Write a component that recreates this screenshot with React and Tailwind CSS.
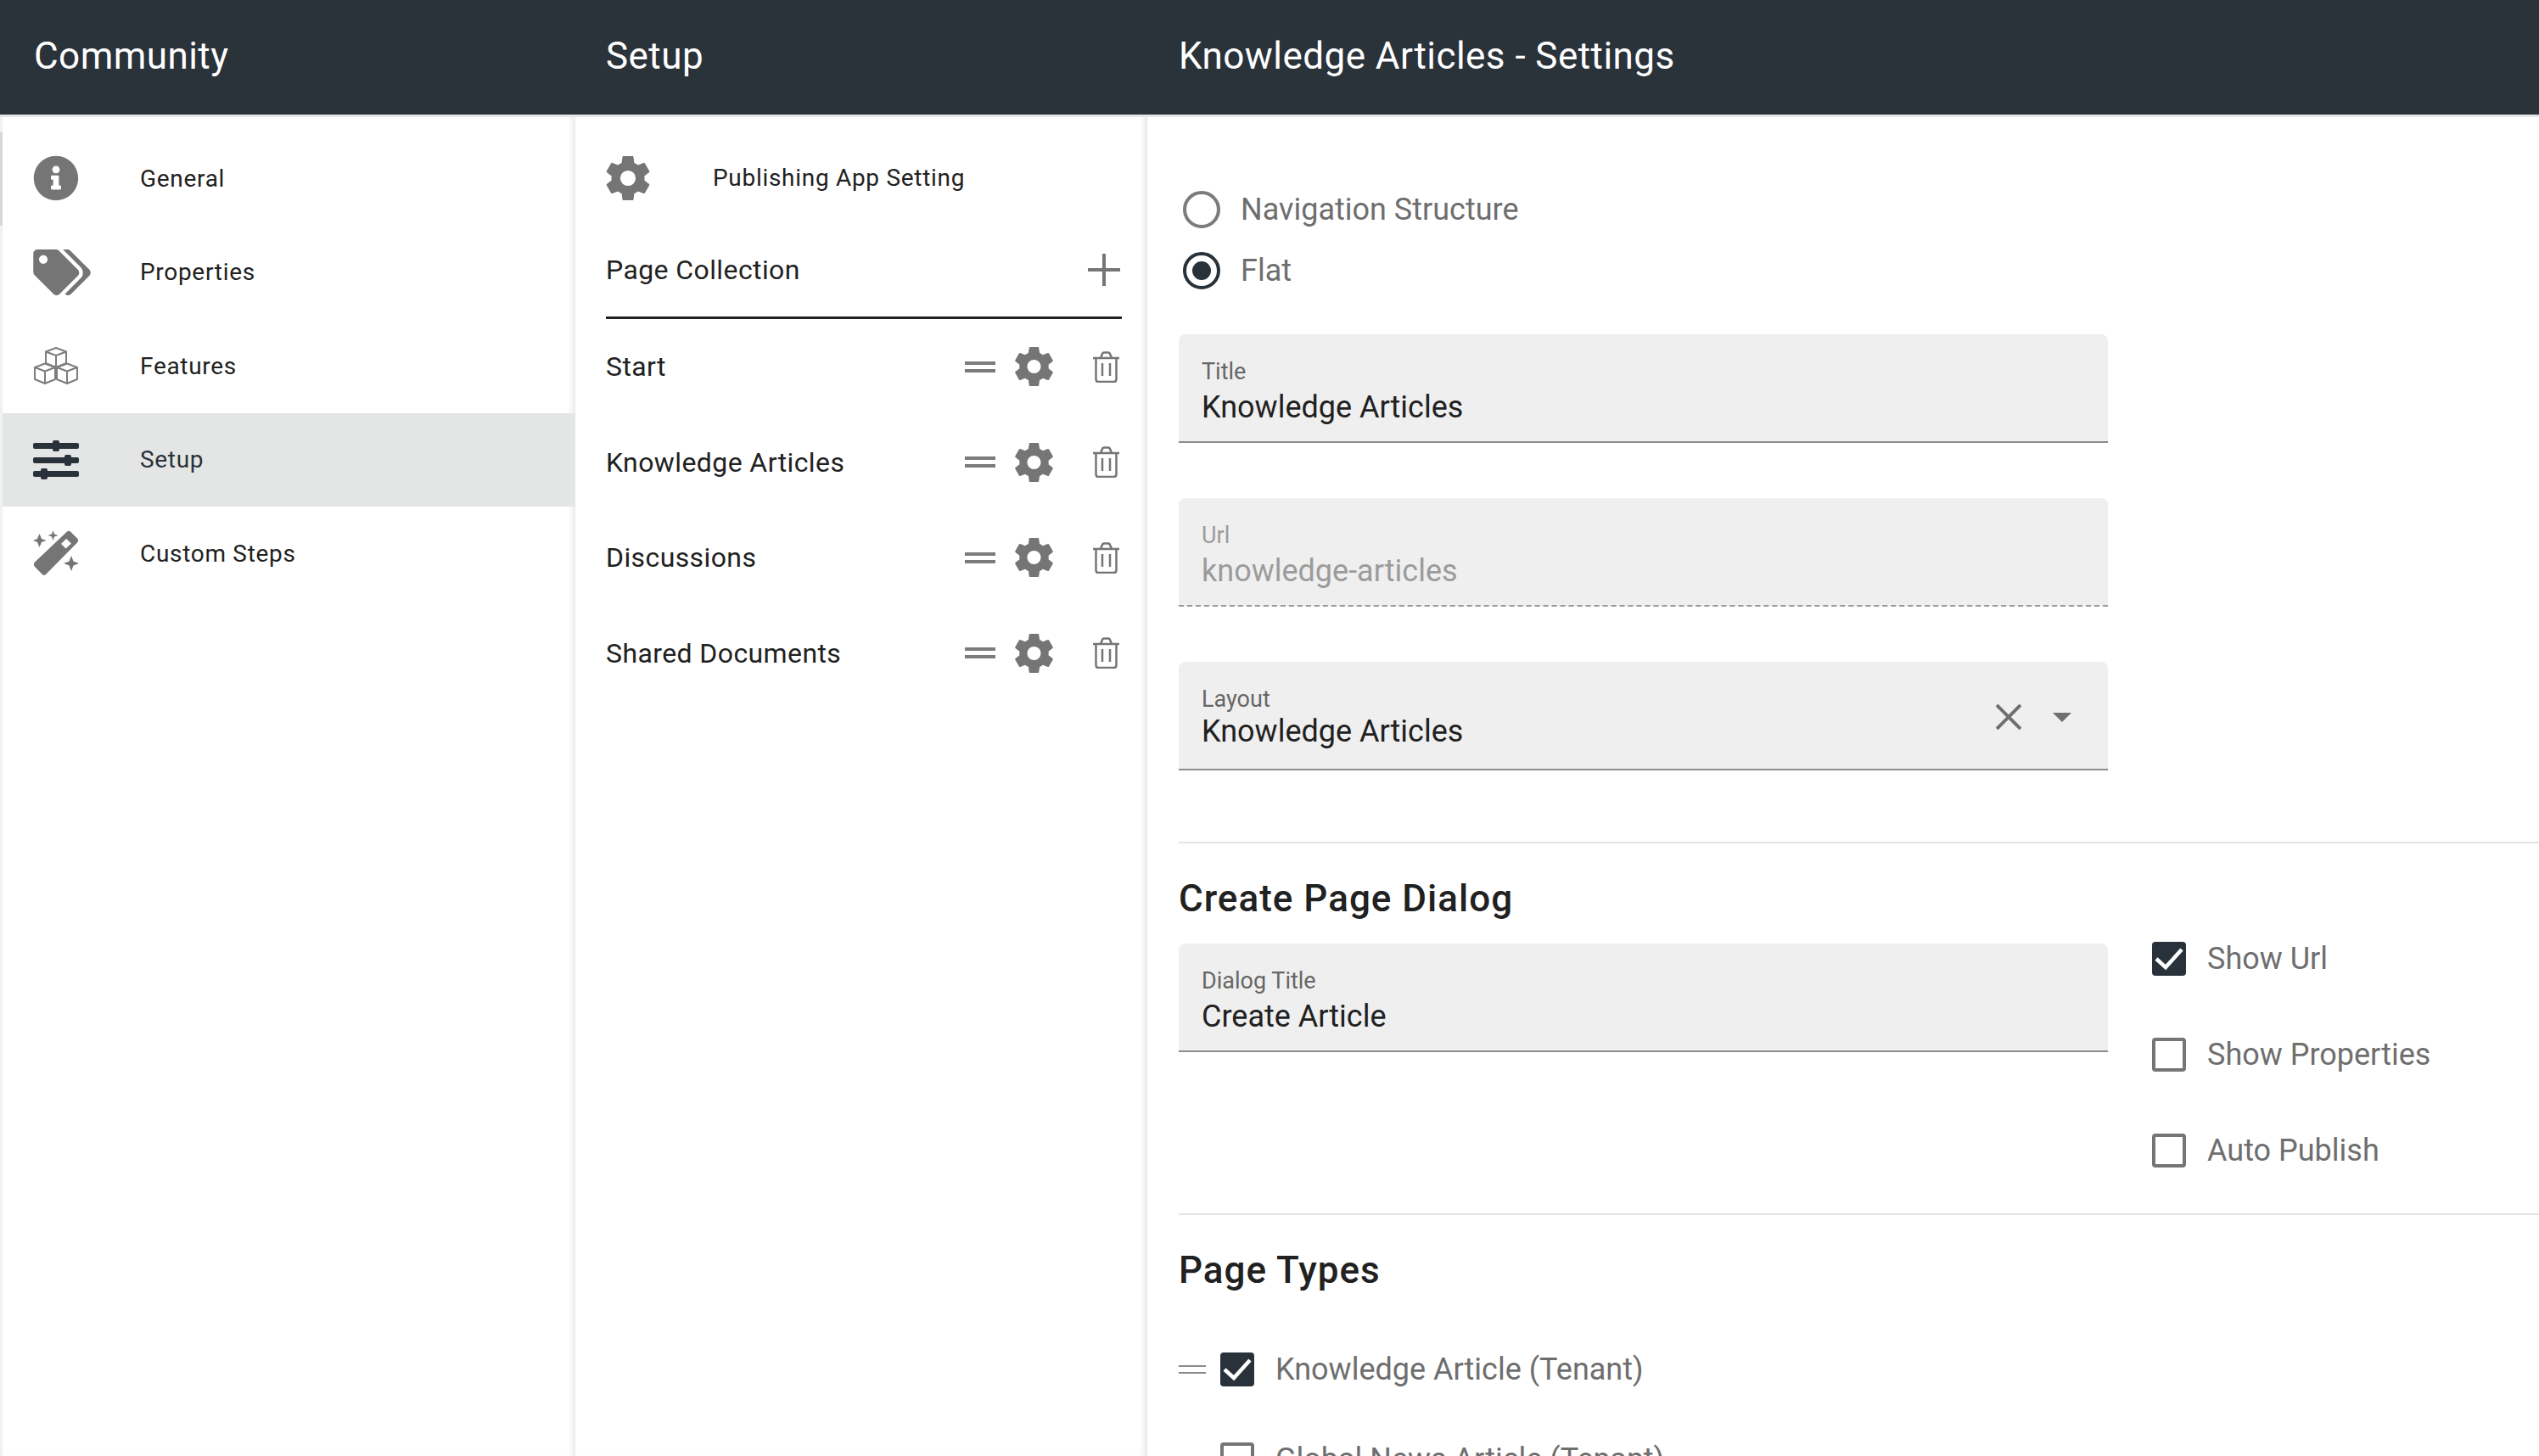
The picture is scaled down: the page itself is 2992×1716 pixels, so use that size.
import { FaInfoCircle, FaTags } from 'react-icons/fa';

const cogPath = 'M12,15.5A3.5,3.5 0 0,1 8.5,12A3.5,3.5 0 0,1 12,8.5A3.5,3.5 0 0,1 15.5,12A3.5,3.5 0 0,1 12,15.5M19.43,12.97C19.47,12.65 19.5,12.33 19.5,12C19.5,11.67 19.47,11.34 19.43,11L21.54,9.37C21.73,9.22 21.78,8.95 21.66,8.73L19.66,5.27C19.54,5.05 19.27,4.96 19.05,5.05L16.56,6.05C16.04,5.66 15.5,5.32 14.87,5.07L14.5,2.42C14.46,2.18 14.25,2 14,2H10C9.75,2 9.54,2.18 9.5,2.42L9.13,5.07C8.5,5.32 7.96,5.66 7.44,6.05L4.95,5.05C4.73,4.96 4.46,5.05 4.34,5.27L2.34,8.73C2.21,8.95 2.27,9.22 2.46,9.37L4.57,11C4.53,11.34 4.5,11.67 4.5,12C4.5,12.33 4.53,12.65 4.57,12.97L2.46,14.63C2.27,14.78 2.21,15.05 2.34,15.27L4.34,18.73C4.46,18.95 4.73,19.03 4.95,18.95L7.44,17.94C7.96,18.34 8.5,18.68 9.13,18.93L9.5,21.58C9.54,21.82 9.75,22 10,22H14C14.25,22 14.46,21.82 14.5,21.58L14.87,18.93C15.5,18.67 16.04,18.34 16.56,17.94L19.05,18.95C19.27,19.03 19.54,18.95 19.66,18.73L21.66,15.27C21.78,15.05 21.73,14.78 21.54,14.63L19.43,12.97Z';

function Cog({ className }) {
  return (
    <svg viewBox="2.2 2 19.6 20" className={className} fill="#757575">
      <path d={cogPath} />
    </svg>
  );
}

function Cubes() {
  return (
    <svg viewBox="0 0 54 46" className="w-[54px] h-[46px]" fill="none" stroke="#7d7d7d" strokeWidth="2" strokeLinejoin="round">
      <path d="M27 2 L39 6.5 V20 L27 25 L15 20 V6.5 Z M15 6.5 L27 11 L39 6.5 M27 11 V25" />
      <path d="M14 20.5 L26 25 V39 L14 44 L2 39 V25 Z M2 25 L14 29.5 L26 25 M14 29.5 V44" />
      <path d="M40 20.5 L52 25 V39 L40 44 L28 39 V25 Z M28 25 L40 29.5 L52 25 M40 29.5 V44" />
    </svg>
  );
}

function Sliders() {
  return (
    <svg viewBox="0 0 54 46" className="w-[54px] h-[46px]" fill="#29323a">
      <rect x="0" y="3" width="54" height="7" rx="2" />
      <rect x="23" y="0" width="8" height="13" rx="2" />
      <rect x="0" y="20" width="54" height="7" rx="2" />
      <rect x="37" y="17" width="8" height="13" rx="2" />
      <rect x="0" y="36" width="54" height="7" rx="2" />
      <rect x="9" y="33" width="8" height="13" rx="2" />
    </svg>
  );
}

function Wand() {
  return (
    <svg viewBox="0 0 54 54" className="w-[54px] h-[54px]" fill="#757575">
      <path fillRule="evenodd" d="M40 1.5 Q42 0 44 1.5 L52.5 10 Q54 12 52.5 14 L15 52 Q13 54 11 52 L1.5 42.5 Q0 40 1.5 38 Z M39 10 L33 16 L38.5 21.5 L45 15.5 Z" />
      <path d="M7.5 4 L10 10 L15.5 12 L10 14 L7.5 20 L5 14 L0 12 L5 10 Z" />
      <path d="M23.500 0 L25 4.500 L29.500 6 L25 7.500 L23.500 12 L22 7.500 L17.500 6 L22 4.500 Z" />
      <path d="M45 30 L47.500 36.500 L54 39 L47.500 41.500 L45 48 L42.500 41.500 L36 39 L42.500 36.500 Z" />
    </svg>
  );
}

function Trash() {
  return (
    <svg viewBox="0 0 31 37" className="w-[31px] h-[37px]" fill="none" stroke="#757575" strokeWidth="2.5">
      <path d="M0 8 H31 M9 8 L11 3 Q11.500 1.500 13 1.500 H18 Q19.500 1.500 20 3 L22 8" />
      <path d="M3.500 8 V33 Q3.500 36 6.500 36 H24.500 Q27.500 36 27.500 33 V8" />
      <path d="M11 14 V29 M20 14 V29" />
    </svg>
  );
}

function DragHandle({ thin }) {
  if (thin) {
    return (
      <div className="w-8 flex flex-col gap-[6px] shrink-0">
        <div className="h-[2px] bg-[#8a8a8a]" />
        <div className="h-[2px] bg-[#8a8a8a]" />
      </div>
    );
  }
  return (
    <div className="w-9 flex flex-col gap-[5px] shrink-0">
      <div className="h-1 bg-[#7b7b7b]" />
      <div className="h-1 bg-[#7b7b7b]" />
    </div>
  );
}

function Checkbox({ checked }) {
  if (checked) {
    return (
      <div className="w-10 h-10 rounded-[4px] bg-[#29323a] shrink-0 flex items-center justify-center">
        <svg viewBox="0 0 40 40" className="w-10 h-10" fill="none" stroke="#fff" strokeWidth="4.500">
          <path d="M5 20 L16 30 L35 9" />
        </svg>
      </div>
    );
  }
  return <div className="w-10 h-10 rounded-[4px] border-4 border-[#757575] shrink-0" />;
}

function Radio({ checked, label }) {
  return (
    <div className="h-[72px] flex items-center pl-[5px]">
      <div className={`w-[44px] h-[44px] rounded-full border-[4px] flex items-center justify-center ${checked ? 'border-[#29323a]' : 'border-[#7b7b7b]'}`}>
        {checked && <div className="w-[22px] h-[22px] rounded-full bg-[#29323a]" />}
      </div>
      <span className="ml-[24px] text-[36px] text-[#6e6e6e]">{label}</span>
    </div>
  );
}

function Field({ label, value, disabled, tight, children, className = '' }) {
  return (
    <div className={`w-[1095px] h-[128px] bg-[#efefef] rounded-t-[8px] px-[27px] flex items-start ${disabled ? 'border-b-2 border-dashed border-[#9a9a9a]' : 'border-b-2 border-[#8c8c8c]'} ${className}`}>
      <div className="flex-1 pt-[27px]">
        <div className={`text-[27px] leading-[34px] ${disabled ? 'text-[#9b9b9b]' : 'text-[#666666]'}`}>{label}</div>
        <div className={`text-[36px] leading-[46px] ${tight ? '-mt-[2px]' : 'mt-[2px]'} ${disabled ? 'text-[#9b9b9b]' : 'text-[#212121]'}`}>{value}</div>
      </div>
      {children}
    </div>
  );
}

function CheckRow({ checked, label }) {
  return (
    <div className="h-[113px] flex items-center gap-[25px]">
      <Checkbox checked={checked} />
      <span className="text-[36px] text-[#6e6e6e]">{label}</span>
    </div>
  );
}

function PanelTitle({ children }) {
  return <span className="text-[44px] tracking-[0.45px] text-white -mt-[3px]">{children}</span>;
}

const navItems = [
  { label: 'General', icon: <FaInfoCircle className="w-[54px] h-[54px] text-[#757575]" /> },
  { label: 'Properties', icon: <FaTags className="w-[68px] h-[54px] text-[#757575]" /> },
  { label: 'Features', icon: <Cubes /> },
  { label: 'Setup', icon: <Sliders />, active: true },
  { label: 'Custom Steps', icon: <Wand /> },
];

const pages = ['Start', 'Knowledge Articles', 'Discussions', 'Shared Documents'];

export default function App() {
  return (
    <div className="w-[2992px] h-[1716px] overflow-hidden bg-white flex font-['Roboto',sans-serif]">
      {/* Community column */}
      <div className="w-[678px] shrink-0 flex flex-col">
        <div className="h-[135px] bg-[#2a323a] flex items-center pl-10 shrink-0">
          <PanelTitle>Community</PanelTitle>
        </div>
        <div className="flex-1 flex border-t-[3px] border-[#e6e6e6]">
          <div className="w-[3px] shrink-0 bg-[#f1f1f1] pt-[18px]">
            <div className="h-[110px] bg-[#d5d8d8]" />
          </div>
          <div className="flex-1 pt-[17px] shadow-[inset_-8px_0_8px_-6px_rgba(0,0,0,0.12)]">
            {navItems.map((item) => (
              <div key={item.label} className={`h-[110.500px] flex items-center ${item.active ? 'bg-[#e4e6e5]' : ''}`}>
                <div className="w-[162px] pl-9 shrink-0 flex items-center">{item.icon}</div>
                <span className={`text-[28px] font-[450] tracking-[0.7px] mt-[1px] ${item.active ? 'text-[#29323a]' : 'text-[#212121]'}`}>{item.label}</span>
              </div>
            ))}
          </div>
        </div>
      </div>

      {/* Setup column */}
      <div className="w-[674px] shrink-0 flex flex-col">
        <div className="h-[135px] bg-[#2a323a] flex items-center pl-[36px] shrink-0">
          <PanelTitle>Setup</PanelTitle>
        </div>
        <div className="flex-1 border-t-[3px] border-[#e6e6e6] pl-[36px] pr-[30px] shadow-[inset_-8px_0_8px_-6px_rgba(0,0,0,0.14)]">
          <div className="h-[144px] flex items-center">
            <Cog className="w-[52px] h-[52px] shrink-0" />
            <span className="ml-[74px] text-[28px] font-[450] tracking-[0.7px] text-[#212121]">Publishing App Setting</span>
          </div>
          <div className="h-[94px] flex items-center justify-between border-b-[3px] border-[#222222] pb-[20px]">
            <span className="text-[32px] font-[450] tracking-[0.4px] text-[#212121]">Page Collection</span>
            <svg viewBox="0 0 38 38" className="w-[38px] h-[38px] mr-[2px]" stroke="#757575" strokeWidth="4">
              <path d="M0 19 H38 M19 0 V38" />
            </svg>
          </div>
          {pages.map((page) => (
            <div key={page} className="h-[112.500px] flex items-center">
              <span className="flex-1 text-[32px] font-[450] tracking-[0.4px] text-[#212121]">{page}</span>
              <DragHandle />
              <Cog className="ml-[23px] w-[45px] h-[46px]" />
              <div className="ml-[47px] mr-[3px]"><Trash /></div>
            </div>
          ))}
        </div>
      </div>

      {/* Settings column */}
      <div className="flex-1 flex flex-col min-w-0">
        <div className="h-[135px] bg-[#2a323a] flex items-center pl-[37px] shrink-0">
          <PanelTitle>Knowledge Articles - Settings</PanelTitle>
        </div>
        <div className="flex-1 border-t-[3px] border-[#e6e6e6] pl-[37px] pt-[73px]">
          <Radio label="Navigation Structure" />
          <Radio checked label="Flat" />
          <Field label="Title" value="Knowledge Articles" className="mt-[39px]" />
          <Field label="Url" value="knowledge-articles" disabled className="mt-[65px]" />
          <Field label="Layout" value="Knowledge Articles" tight className="mt-[65px]">
            <div className="flex items-center h-full pt-[4px]">
              <svg viewBox="0 0 30 30" className="w-[30px] h-[30px]" stroke="#6f6f6f" strokeWidth="4" fill="none">
                <path d="M1 1 L29 29 M29 1 L1 29" />
              </svg>
              <svg viewBox="0 0 22 11" className="w-[22px] h-[11px] ml-[37px] mr-[16px]" fill="#6f6f6f">
                <path d="M0 0 H22 L11 11 Z" />
              </svg>
            </div>
          </Field>
          <div className="mt-[84px] border-t-2 border-[#e3e3e3] h-[120px] pt-[11px] flex items-center">
            <span className="text-[44px] tracking-[1px] font-medium text-[#212121]">Create Page Dialog</span>
          </div>
          <div className="flex h-[318px]">
            <Field label="Dialog Title" value="Create Article" />
            <div className="ml-[52px] -mt-[39px]">
              <CheckRow checked label="Show Url" />
              <CheckRow label="Show Properties" />
              <CheckRow label="Auto Publish" />
            </div>
          </div>
          <div className="border-t-2 border-[#e3e3e3] h-[132px] flex items-center">
            <span className="text-[44px] tracking-[1px] font-medium text-[#212121]">Page Types</span>
          </div>
          <div className="h-[104px] flex items-center">
            <DragHandle thin />
            <div className="ml-[17px] flex items-center gap-[25px]">
              <Checkbox checked />
              <span className="text-[36px] text-[#6e6e6e]">Knowledge Article (Tenant)</span>
            </div>
          </div>
          <div className="h-[108px] flex items-center pl-[49px] gap-[25px]">
            <Checkbox />
            <span className="text-[36px] text-[#6e6e6e]">Global News Article (Tenant)</span>
          </div>
        </div>
      </div>
    </div>
  );
}
